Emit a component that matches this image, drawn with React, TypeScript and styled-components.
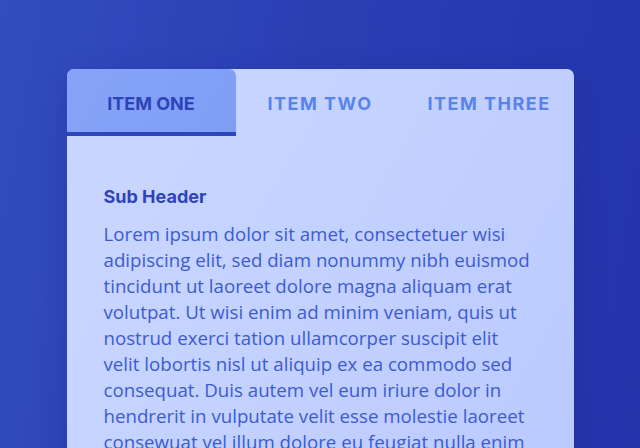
import styled, { createGlobalStyle } from "styled-components";
import { useState } from "react";

const tabs = ['Item One', 'Item Two', 'Item Three']

const body = 'Lorem ipsum dolor sit amet, consectetuer wisi adipiscing elit, sed diam nonummy nibh euismod tincidunt ut laoreet dolore magna aliquam erat volutpat. Ut wisi enim ad minim veniam, quis ut nostrud exerci tation ullamcorper suscipit elit velit lobortis nisl ut aliquip ex ea commodo sed consequat. Duis autem vel eum iriure dolor in hendrerit in vulputate velit esse molestie laoreet consewuat vel illum dolore eu feugiat nulla enim facilisis at vero eros et accumsan.'

// style
const GlobalStyle = createGlobalStyle`
  html, body {
    margin: 0;
    height: 100%;
    overflow: hidden;
  }
  body {
    background: linear-gradient(100deg, #324dc0 0%, #2a3db3 50%, #2435ac 100%);
  }
`
const Page = styled.div`
  width: 640px;
  height: 448px;
  padding-top: 69px;
  box-sizing: border-box;
  display: flex;
  justify-content: center;
  align-items: flex-start;
`
const Card = styled.div`
  width: 507px;
  border-radius: 7px;
  overflow: hidden;
  background: linear-gradient(120deg, #c9d7ff 0%, #c3d1ff 50%, #bac9ff 100%);
  box-shadow: 0 10px 30px rgba(20, 30, 120, 0.25);
`
const TabList = styled.ul`
  display: grid;
  grid-template-columns: repeat(3, 1fr);
  margin: 0;
  padding: 0;
  list-style: none;
`
const Tab = styled.li<{ $active: boolean }>`
  height: 67px;
  box-sizing: border-box;
  display: flex;
  align-items: center;
  justify-content: center;
  padding-top: 6px;
  font-family: Inter, "Liberation Sans", sans-serif;
  font-weight: 700;
  font-size: 18px;
  text-transform: uppercase;
  letter-spacing: ${p => p.$active ? '0' : '1.5px'};
  color: ${p => p.$active ? '#2d44b8' : '#5a82ec'};
  background: ${p => p.$active ? 'linear-gradient(120deg, #86a3f8, #7e9ef6)' : 'transparent'};
  border-bottom: 4px solid ${p => p.$active ? '#2f45bb' : 'transparent'};
  border-radius: ${p => p.$active ? '7px 7px 0 0' : '0'};
  cursor: pointer;
`
const Content = styled.div`
  padding: 50px 37px 40px;
`
const SubHeader = styled.h3`
  margin: 0 0 14px;
  font-family: Inter, "Liberation Sans", sans-serif;
  font-weight: 700;
  font-size: 18px;
  color: #2f44b6;
`
const Text = styled.p`
  margin: 0;
  font-family: "Open Sans", "Noto Sans", sans-serif;
  font-size: 18.7px;
  line-height: 26px;
  color: #3d5bd0;
`

function App() {
  const [active, setActive] = useState(0);
  return (
    <>
      <GlobalStyle />
      <Page>
        <Card>
          <TabList>
            {tabs.map((t, i) =>
              <Tab key={i} $active={i === active} onClick={() => setActive(i)}>{t}</Tab>
            )}
          </TabList>
          <Content>
            <SubHeader>Sub Header</SubHeader>
            <Text>{body}</Text>
          </Content>
        </Card>
      </Page>
    </>
  )
}

export default App
